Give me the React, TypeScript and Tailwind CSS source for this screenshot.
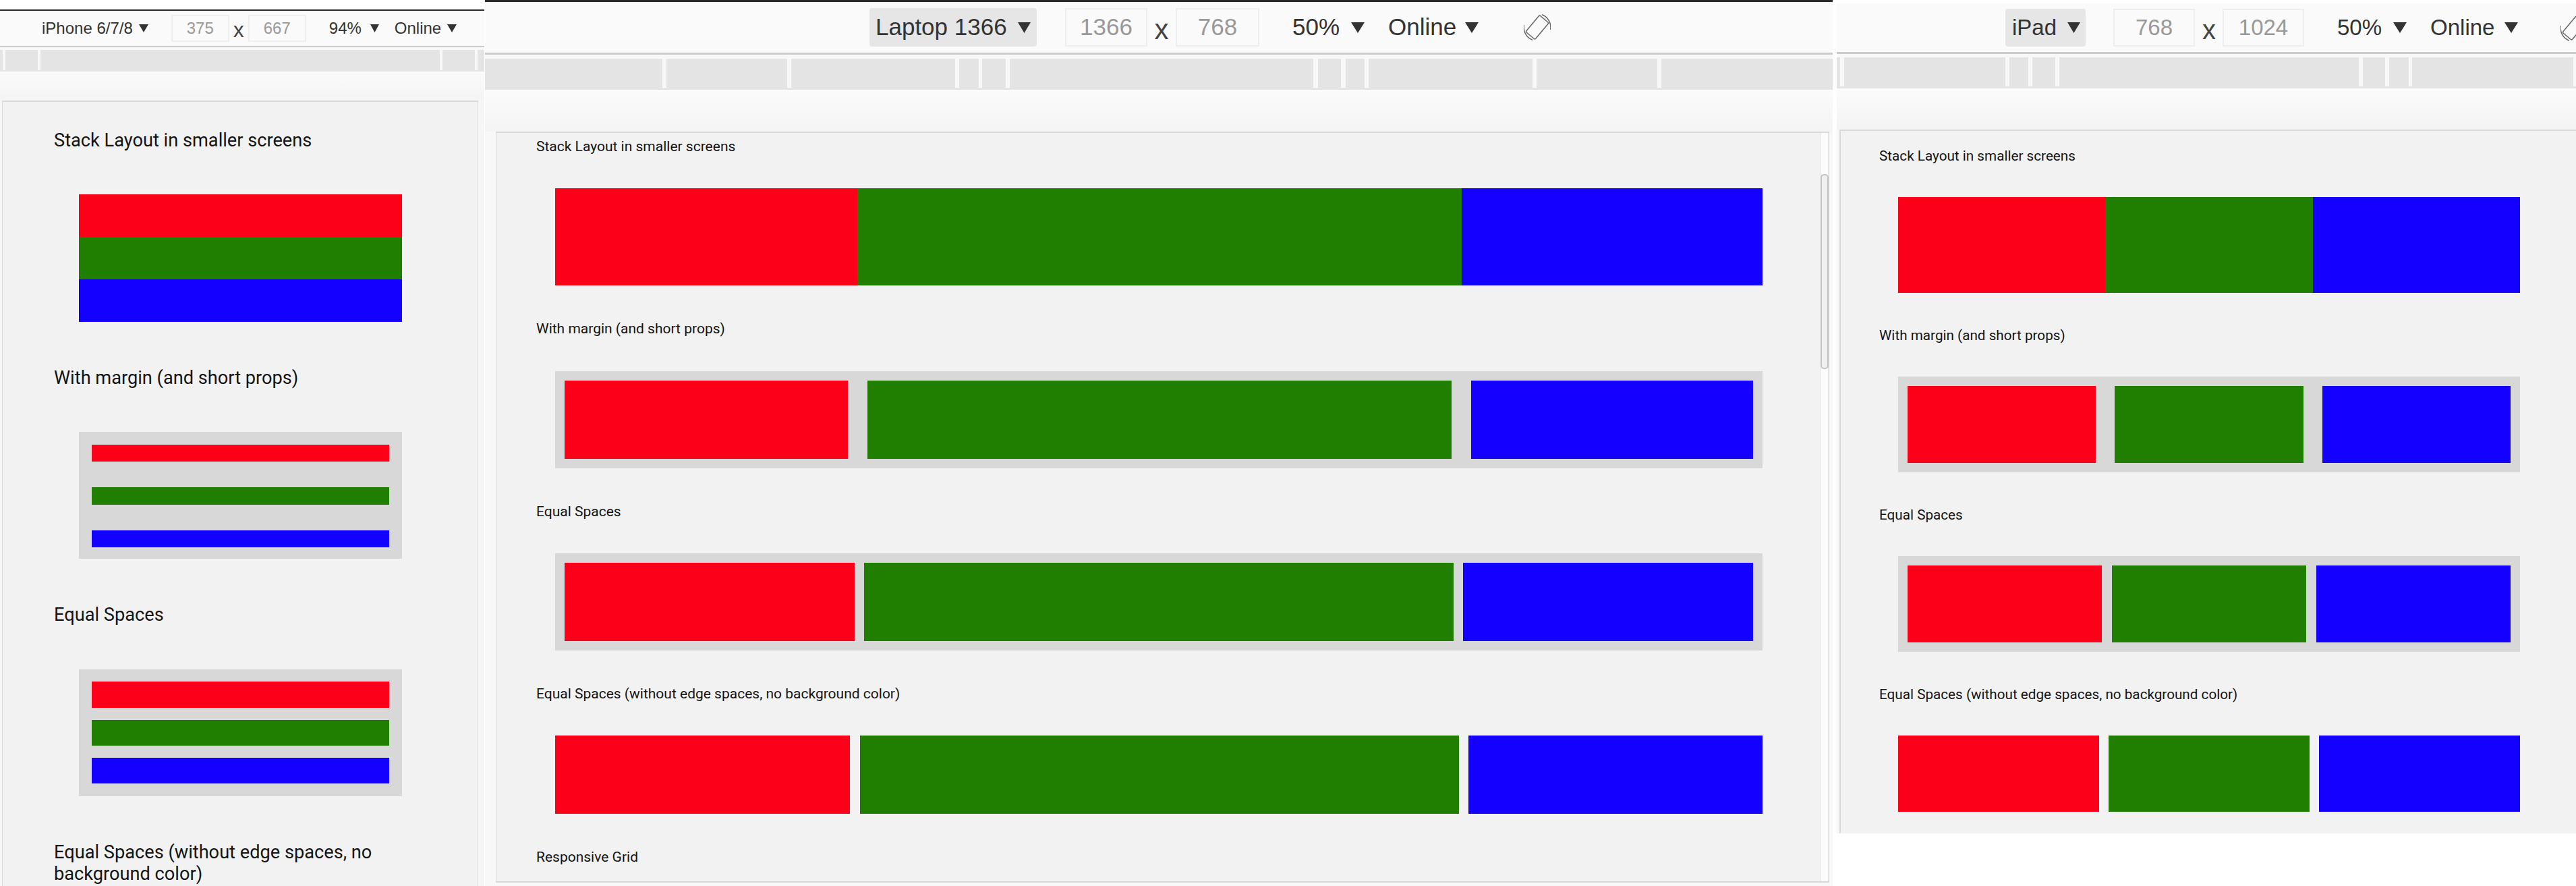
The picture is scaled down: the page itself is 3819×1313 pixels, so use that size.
import React from "react";

const UI = "font-['Liberation_Sans',Arial,sans-serif]";
const LABEL = "font-['Roboto',sans-serif] text-[#141414]";

const Tri = ({ className }: { className: string }) => (
  <svg viewBox="0 0 14 12" preserveAspectRatio="none" className={className}>
    <polygon points="0,0 14,0 7,12" fill="#333333" />
  </svg>
);

const Notch = ({ className }: { className: string }) => (
  <div className={`bg-[#f8f8f8] shrink-0 ${className}`} />
);

const RotateIcon = ({ className }: { className: string }) => (
  <svg viewBox="0 0 40 41" fill="none" stroke="#666666" strokeWidth="1.5" className={className}>
    <rect x="11" y="4.5" width="18" height="32" rx="2" transform="rotate(40 20 20.5)" />
    <path d="M27 1.8 A20 20 0 0 1 39.6 24" />
    <path d="M13 39.2 A20 20 0 0 1 0.4 17" />
  </svg>
);

const Red = ({ className = "" }: { className?: string }) => <div className={`bg-[#fb0018] ${className}`} />;
const Green = ({ className = "" }: { className?: string }) => <div className={`bg-[#207e00] ${className}`} />;
const Blue = ({ className = "" }: { className?: string }) => <div className={`bg-[#1300ff] ${className}`} />;

const MobilePane = () => (
  <div className="w-[718px] h-[1313px] mr-[1px] shrink-0 overflow-hidden bg-[#f6f6f6]">
    <div className="h-[14px] bg-white" />
    <div className="h-[2px] bg-[#2b2b2b]" />
    <div className={`h-[52px] flex items-center pl-[62px] bg-[#fafafa] text-[24px] text-[#333] ${UI}`}>
      <span>iPhone 6/7/8</span>
      <Tri className="ml-[9px] w-[14px] h-[12px]" />
      <div className="ml-[34px] w-[86px] h-[40px] border-2 border-[#eeeeee] flex items-center justify-center text-[#999]">375</div>
      <span className="ml-[6px] w-[16px] text-[32px] leading-none text-center text-[#444] mt-[4px]">x</span>
      <div className="ml-[6px] w-[86px] h-[40px] border-2 border-[#eeeeee] flex items-center justify-center text-[#999]">667</div>
      <span className="ml-[34px]">94%</span>
      <Tri className="ml-[13px] w-[13px] h-[12px]" />
      <span className="ml-[23px]">Online</span>
      <Tri className="ml-[9px] w-[14px] h-[12px]" />
    </div>
    <div className="h-[2px] bg-[#cccccc]" />
    <div className="h-[4px] bg-[#f8f8f8]" />
    <div className="h-[32px] bg-[#e4e4e4] flex items-start">
      <Notch className="ml-[4px] w-[4px] h-[30px]" />
      <Notch className="ml-[48px] w-[4px] h-[30px]" />
      <Notch className="ml-[592px] w-[4px] h-[30px]" />
      <Notch className="ml-[48px] w-[4px] h-[30px]" />
    </div>
    <div className="h-[43px] bg-gradient-to-b from-[#fbfbfb] to-[#f4f4f4]" />
    <div className="ml-[3px] w-[706px] h-[1200px] bg-[#f2f2f2] border-l border-t-2 border-r border-[#d9d9d9] pl-[76px] pt-[41px]">
      <div className={`w-[540px] text-[27.2px] leading-[32px] ${LABEL}`}>Stack Layout in smaller screens</div>
      <div className="ml-[37px] mt-[64px] w-[479px] h-[189px] grid grid-rows-3">
        <Red />
        <Green />
        <Blue />
      </div>
      <div className={`w-[540px] mt-[67px] text-[27.2px] leading-[32px] ${LABEL}`}>With margin (and short props)</div>
      <div className="ml-[37px] mt-[64px] w-[479px] h-[188px] bg-[#d8d8d8] px-[19px] pt-[19px] flex flex-col gap-[38px]">
        <Red className="h-[25px]" />
        <Green className="h-[26px]" />
        <Blue className="h-[25px]" />
      </div>
      <div className={`w-[540px] mt-[67px] text-[27.2px] leading-[32px] ${LABEL}`}>Equal Spaces</div>
      <div className="ml-[37px] mt-[65px] w-[479px] h-[188px] bg-[#d8d8d8] px-[19px] pt-[18px] flex flex-col gap-[18px]">
        <Red className="h-[39px]" />
        <Green className="h-[38px]" />
        <Blue className="h-[38px]" />
      </div>
      <div className={`w-[540px] mt-[67px] text-[27.2px] leading-[32px] ${LABEL}`}>Equal Spaces (without edge spaces, no background color)</div>
    </div>
  </div>
);

const LaptopPane = () => (
  <div className="w-[1998px] h-[1313px] shrink-0 overflow-hidden bg-[#f8f8f8]">
    <div className="h-[3px] bg-[#2b2b2b]" />
    <div className={`h-[75px] flex items-center pl-[570px] bg-[#fafafa] text-[35px] text-[#333] ${UI}`}>
      <div className="w-[248px] h-[57px] pl-[9px] rounded-[4px] bg-[#e6e6e6] flex items-center">
        <span>Laptop 1366</span>
        <Tri className="ml-[16px] w-[19px] h-[16px]" />
      </div>
      <div className="ml-[42px] w-[122px] h-[57px] border-2 border-[#eeeeee] flex items-center justify-center text-[#999]">1366</div>
      <span className="ml-[10px] w-[22px] text-[42px] leading-none text-center text-[#444] mt-[6px]">x</span>
      <div className="ml-[10px] w-[124px] h-[57px] border-2 border-[#eeeeee] flex items-center justify-center text-[#999]">768</div>
      <span className="ml-[49px]">50%</span>
      <Tri className="ml-[17px] w-[20px] h-[16px]" />
      <span className="ml-[35px]">Online</span>
      <Tri className="ml-[13px] w-[20px] h-[16px]" />
      <RotateIcon className="ml-[67px] w-[40px] h-[41px]" />
    </div>
    <div className="h-[3px] bg-[#cccccc]" />
    <div className="h-[6px] bg-[#f8f8f8]" />
    <div className="h-[46px] bg-[#e4e4e4] flex items-start">
      <Notch className="ml-[263px] w-[6px] h-[43px]" />
      <Notch className="ml-[179px] w-[6px] h-[43px]" />
      <Notch className="ml-[243px] w-[6px] h-[43px]" />
      <Notch className="ml-[29px] w-[5px] h-[43px]" />
      <Notch className="ml-[35px] w-[6px] h-[43px]" />
      <Notch className="ml-[450px] w-[7px] h-[43px]" />
      <Notch className="ml-[34px] w-[7px] h-[43px]" />
      <Notch className="ml-[28px] w-[6px] h-[43px]" />
      <Notch className="ml-[243px] w-[6px] h-[43px]" />
      <Notch className="ml-[179px] w-[6px] h-[43px]" />
    </div>
    <div className="h-[62px] bg-gradient-to-b from-[#fbfbfb] to-[#f4f4f4]" />
    <div className="relative ml-[16px] w-[1977px] h-[1113px] bg-[#f2f2f2] border-l border-t-2 border-r border-b-2 border-[#d9d9d9] pl-[59px] pt-[8px]">
      <div className={`h-[24px] text-[21px] leading-[24px] ${LABEL}`}>Stack Layout in smaller screens</div>
      <div className="ml-[28px] mt-[50px] w-[1790px] h-[144px] grid grid-cols-[448px_896px_446px]">
        <Red />
        <Green />
        <Blue />
      </div>
      <div className={`h-[24px] mt-[52px] text-[21px] leading-[24px] ${LABEL}`}>With margin (and short props)</div>
      <div className="ml-[28px] mt-[51px] w-[1790px] h-[144px] bg-[#d8d8d8] p-[14px] grid grid-cols-[420px_866px_418px] gap-[29px]">
        <Red />
        <Green />
        <Blue />
      </div>
      <div className={`h-[24px] mt-[52px] text-[21px] leading-[24px] ${LABEL}`}>Equal Spaces</div>
      <div className="ml-[28px] mt-[50px] w-[1790px] h-[144px] bg-[#d8d8d8] p-[14px] grid grid-cols-[430px_874px_430px] gap-[14px]">
        <Red />
        <Green />
        <Blue />
      </div>
      <div className={`h-[24px] mt-[52px] text-[21px] leading-[24px] ${LABEL}`}>Equal Spaces (without edge spaces, no background color)</div>
      <div className="ml-[28px] mt-[50px] w-[1790px] h-[116px] grid grid-cols-[437px_888px_436px] gap-[14.5px]">
        <Red />
        <Green />
        <Blue />
      </div>
      <div className={`h-[24px] mt-[52px] text-[21px] leading-[24px] ${LABEL}`}>Responsive Grid</div>
      <div className="absolute top-0 bottom-0 right-0 w-[12px] bg-[#fcfcfc] border-x border-[#e6e6e6]">
        <div className="absolute top-[61px] left-[-1px] right-[-1px] h-[289px] rounded-[5px] border-2 border-[#c4c4c4] bg-[#f0f0f0]" />
      </div>
    </div>
  </div>
);

const TabletPane = () => (
  <div className="ml-[6px] w-[1096px] h-[1235px] shrink-0 overflow-hidden bg-[#f8f8f8]">
    <div className="h-[5px] bg-white" />
    <div className={`h-[72px] flex items-center pl-[250px] bg-[#fafafa] text-[33px] text-[#333] ${UI}`}>
      <div className="w-[119px] h-[56px] pl-[10px] rounded-[4px] bg-[#e6e6e6] flex items-center shrink-0">
        <span>iPad</span>
        <Tri className="ml-[16px] w-[19px] h-[16px]" />
      </div>
      <div className="ml-[41px] w-[121px] h-[56px] shrink-0 border-2 border-[#eeeeee] flex items-center justify-center text-[#999]">768</div>
      <span className="ml-[10px] w-[22px] shrink-0 text-[40px] leading-none text-center text-[#444] mt-[6px]">x</span>
      <div className="ml-[9px] w-[121px] h-[56px] shrink-0 border-2 border-[#eeeeee] flex items-center justify-center text-[#999]">1024</div>
      <span className="ml-[49px]">50%</span>
      <Tri className="ml-[17px] w-[20px] h-[16px] shrink-0" />
      <span className="ml-[35px]">Online</span>
      <Tri className="ml-[15px] w-[20px] h-[16px] shrink-0" />
      <RotateIcon className="ml-[63px] w-[40px] h-[41px] shrink-0" />
    </div>
    <div className="h-[3px] bg-[#cccccc]" />
    <div className="h-[5px] bg-[#f8f8f8]" />
    <div className="h-[46px] bg-[#e4e4e4] flex items-start">
      <Notch className="ml-[5px] w-[6px] h-[43px]" />
      <Notch className="ml-[239px] w-[6px] h-[43px]" />
      <Notch className="ml-[28px] w-[6px] h-[43px]" />
      <Notch className="ml-[34px] w-[6px] h-[43px]" />
      <Notch className="ml-[444px] w-[6px] h-[43px]" />
      <Notch className="ml-[33px] w-[6px] h-[43px]" />
      <Notch className="ml-[29px] w-[5px] h-[43px]" />
      <Notch className="ml-[239px] w-[4px] h-[43px]" />
    </div>
    <div className="h-[61px] bg-gradient-to-b from-[#fbfbfb] to-[#f4f4f4]" />
    <div className="ml-[4px] w-[1092px] h-[1043px] bg-[#f2f2f2] border-l-2 border-t-2 border-[#d9d9d9] pl-[57px] pt-[25px]">
      <div className={`h-[24px] text-[20.7px] leading-[24px] ${LABEL}`}>Stack Layout in smaller screens</div>
      <div className="ml-[28px] mt-[49px] w-[922px] h-[142px] grid grid-cols-3">
        <Red />
        <Green />
        <Blue />
      </div>
      <div className={`h-[24px] mt-[51px] text-[20.7px] leading-[24px] ${LABEL}`}>With margin (and short props)</div>
      <div className="ml-[28px] mt-[49px] w-[922px] h-[142px] bg-[#d8d8d8] p-[14px] grid grid-cols-3 gap-[28px]">
        <Red />
        <Green />
        <Blue />
      </div>
      <div className={`h-[24px] mt-[51px] text-[20.7px] leading-[24px] ${LABEL}`}>Equal Spaces</div>
      <div className="ml-[28px] mt-[49px] w-[922px] h-[142px] bg-[#d8d8d8] p-[14px] grid grid-cols-3 gap-[14.5px]">
        <Red />
        <Green />
        <Blue />
      </div>
      <div className={`h-[24px] mt-[51px] text-[20.7px] leading-[24px] ${LABEL}`}>Equal Spaces (without edge spaces, no background color)</div>
      <div className="ml-[28px] mt-[49px] w-[922px] h-[113px] grid grid-cols-3 gap-[14.5px]">
        <Red />
        <Green />
        <Blue />
      </div>
    </div>
  </div>
);

export default function App() {
  return (
    <div className="w-[3819px] h-[1313px] overflow-hidden flex items-start bg-white">
      <MobilePane />
      <LaptopPane />
      <TabletPane />
    </div>
  );
}
